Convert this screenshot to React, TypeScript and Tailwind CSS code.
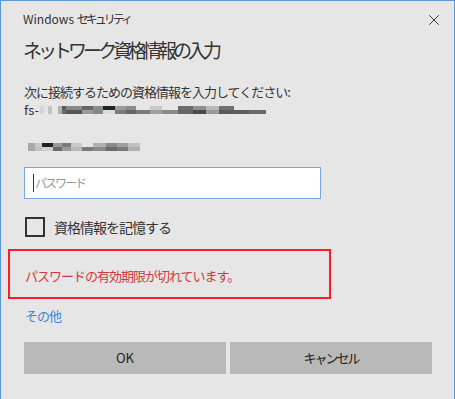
import { X } from "lucide-react";

type Block = [number, string, string];

// mosaic blur of the server name
const serverBlocks: Block[] = [
  [4, "#d4d4d4", "#d4d4d4"],
  [4, "#e6e6e6", "#e6e6e6"],
  [4, "#c2c2c2", "#c2c2c2"],
  [6, "#e6e6e6", "#e6e6e6"],
  [4, "#b0b0b0", "#b0b0b0"],
  [4, "#5a5a5a", "#6a6a6a"],
  [16, "#8a8a8a", "#555555"],
  [11, "#666666", "#9a9a9a"],
  [10, "#8c8c8c", "#888888"],
  [12, "#222222", "#dcdcdc"],
  [11, "#9c9c9c", "#7a7a7a"],
  [10, "#8a8a8a", "#666666"],
  [14, "#e6e6e6", "#7a7a7a"],
  [12, "#c8c8c8", "#a0a0a0"],
  [16, "#e6e6e6", "#8a8a8a"],
  [15, "#6a6a6a", "#666666"],
  [13, "#909090", "#4a4a4a"],
  [13, "#b8b8b8", "#9a9a9a"],
  [15, "#707070", "#5a5a5a"],
  [15, "#e6e6e6", "#5c5c5c"],
  [17, "#e6e6e6", "#6a6a6a"],
];

const userBlocks: Block[] = [
  [7, "#a8a8a8", "#a8a8a8"],
  [7, "#c8c8c8", "#c0c0c0"],
  [11, "#222222", "#d0d0d0"],
  [9, "#9a9a9a", "#6a6a6a"],
  [9, "#7a7a7a", "#9a9a9a"],
  [11, "#c8c8c8", "#b8b8b8"],
  [11, "#e6e6e6", "#7a7a7a"],
  [13, "#b0b0b0", "#8a8a8a"],
  [11, "#8a8a8a", "#6a6a6a"],
  [11, "#a0a0a0", "#7a7a7a"],
  [12, "#c0c0c0", "#b0b0b0"],
];

function Mosaic({ blocks }: { blocks: Block[] }) {
  return (
    <div className="flex h-[8px]">
      {blocks.map(([w, top, bottom], i) => (
        <div key={i} className="flex flex-col" style={{ width: w }}>
          <div className="h-[4px]" style={{ backgroundColor: top }} />
          <div className="h-[4px]" style={{ backgroundColor: bottom }} />
        </div>
      ))}
    </div>
  );
}

export default function App() {
  return (
    <div
      className="w-[455px] h-[399px] bg-[#e6e6e6] border-t border-l border-r border-[#5b95dc] flex flex-col text-[#1a1a1a]"
      style={{ fontFamily: '"Noto Sans CJK JP", "Liberation Sans", sans-serif' }}
    >
      <div className="flex items-start justify-between pl-[22px] pr-[11px] pt-[9px]">
        <span className="text-[12px] leading-[18px] text-[#333]">
          Windows <span className="tracking-[-3px]">セキュリティ</span>
        </span>
        <X size={18} strokeWidth={1.3} className="text-[#333] mt-[1px]" />
      </div>

      <h1 className="pl-[22px] mt-[8px] text-[19px] leading-[26px] tracking-[-4px] text-[#333]">
        ネットワーク資格情報の入力
      </h1>

      <div className="pl-[23px] mt-[20px] text-[13px] leading-[18px] tracking-[-1px] text-[#333]">
        次に接続するための資格情報を入力してください:
      </div>
      <div className="pl-[23px] flex items-center gap-[1px] h-[18px]">
        <span className="text-[13px] leading-[18px] text-[#333]">fs-</span>
        <Mosaic blocks={serverBlocks} />
      </div>

      <div className="pl-[27px] mt-[24px]">
        <Mosaic blocks={userBlocks} />
      </div>

      <div className="ml-[23px] mt-[16px] w-[297px] h-[32px] bg-white border border-[#7aa6e0] flex items-center px-[8px]">
        <div className="w-[1px] h-[18px] bg-[#333]" />
        <span className="ml-[1px] text-[12px] tracking-[-2px] text-[#9a9a9a]">
          パスワード
        </span>
      </div>

      <div className="ml-[24px] mt-[18px] flex items-center gap-[9px]">
        <div className="w-[20px] h-[20px] border-2 border-[#333]" />
        <span className="text-[14px] leading-[20px] tracking-[-1px] text-[#333]">
          資格情報を記憶する
        </span>
      </div>

      <div className="ml-[7px] mt-[12px] w-[323px] h-[50px] border-2 border-[#ff1c24] flex items-center pl-[15px] pt-[4px]">
        <span className="text-[13px] leading-[18px] tracking-[-1px] text-[#d2383c]">
          パスワードの有効期限が切れています。
        </span>
      </div>

      <div className="pl-[24px] mt-[8px] text-[13px] leading-[18px] tracking-[-1px] text-[#3a87d6]">
        その他
      </div>

      <div className="flex gap-[4px] pl-[23px] mt-[17px]">
        <button className="w-[202px] h-[32px] bg-[#b9b9b9] text-[13px] text-[#222]">
          OK
        </button>
        <button className="w-[202px] h-[32px] bg-[#b9b9b9] text-[13px] tracking-[-2px] text-[#222]">
          キャンセル
        </button>
      </div>
    </div>
  );
}
